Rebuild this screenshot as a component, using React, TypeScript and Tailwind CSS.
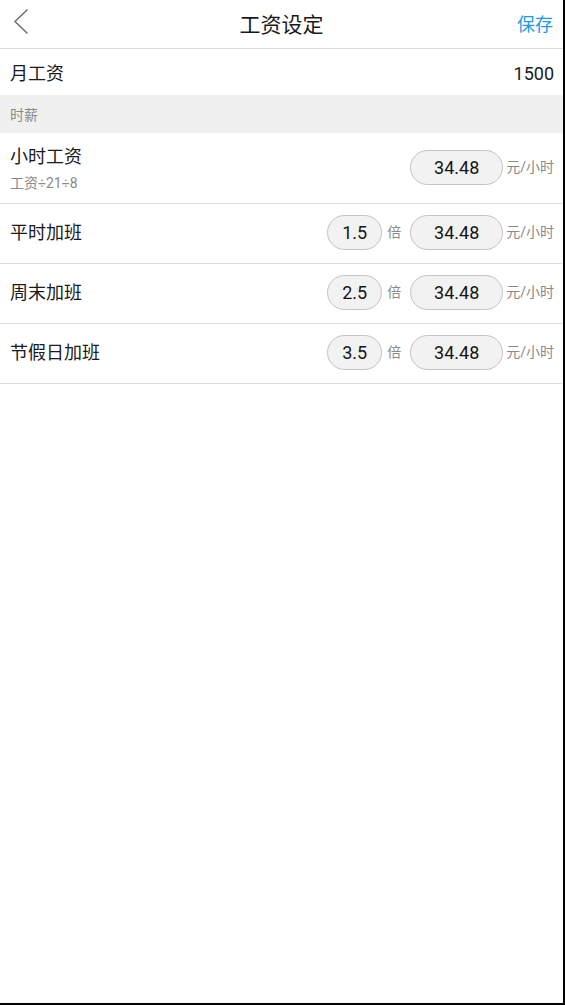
const font = { fontFamily: 'Roboto, "Noto Sans CJK SC", sans-serif' };

type Row = { title: string; rate: string };

const rows: Row[] = [
  { title: '平时加班', rate: '1.5' },
  { title: '周末加班', rate: '2.5' },
  { title: '节假日加班', rate: '3.5' },
];

function Pill({ value, wide }: { value: string; wide?: boolean }) {
  return (
    <div
      className={`h-[35px] ${wide ? 'w-[93px]' : 'w-[55px]'} rounded-full border border-[#c4c4c4] bg-[#f2f2f2] flex items-center justify-center text-[18px] text-[#151515]`}
    >
      {value}
    </div>
  );
}

function Unit() {
  return <span className="ml-[3px] text-[14px] text-[#8a8a8a] whitespace-nowrap">元/小时</span>;
}

export default function App() {
  return (
    <div
      style={font}
      className="w-[565px] h-[1005px] bg-white border-r-2 border-b-2 border-black overflow-hidden"
    >
      {/* Header */}
      <div className="relative h-[49px] border-b border-[#dadada] flex items-center justify-center">
        <svg className="absolute left-[13px] top-[9px]" width="16" height="25" viewBox="0 0 16 25" fill="none">
          <polyline points="14,1 2,12.5 14,24" stroke="#707070" strokeWidth="1.6" strokeLinecap="round" strokeLinejoin="round" />
        </svg>
        <h1 className="text-[21px] text-[#1a1a1a] mt-[3px]">工资设定</h1>
        <button className="absolute right-[10px] top-[11px] text-[18px] text-[#1e9be6]">保存</button>
      </div>

      {/* Monthly */}
      <div className="h-[46px] flex items-center justify-between pl-[10px] pr-[9px] text-[18px] text-[#1a1a1a]">
        <span className="mt-[2px]">月工资</span>
        <span className="mt-[2px]">1500</span>
      </div>

      {/* Section */}
      <div className="h-[38px] bg-[#f0f0f0] flex items-center px-[10px] text-[14px] text-[#8a8a8a]">
        <span className="mt-[2px]">时薪</span>
      </div>

      {/* Hourly */}
      <div className="h-[71px] border-b border-[#dedede] flex items-center justify-between pl-[10px] pr-[9px]">
        <div className="flex flex-col mt-[2px]">
          <span className="text-[18px] text-[#1a1a1a] leading-[24px]">小时工资</span>
          <span className="text-[14px] text-[#8a8a8a] mt-[4px] leading-[20px]">工资÷21÷8</span>
        </div>
        <div className="flex items-center mt-[-2px]">
          <Pill value="34.48" wide />
          <Unit />
        </div>
      </div>

      {rows.map((r) => (
        <div
          key={r.title}
          className="h-[60px] border-b border-[#dedede] flex items-center justify-between pl-[10px] pr-[9px]"
        >
          <span className="text-[18px] text-[#1a1a1a] -mt-[2px]">{r.title}</span>
          <div className="flex items-center -mt-[2px]">
            <Pill value={r.rate} />
            <span className="ml-[5px] mr-[9px] text-[14px] text-[#8a8a8a]">倍</span>
            <Pill value="34.48" wide />
            <Unit />
          </div>
        </div>
      ))}
    </div>
  );
}
